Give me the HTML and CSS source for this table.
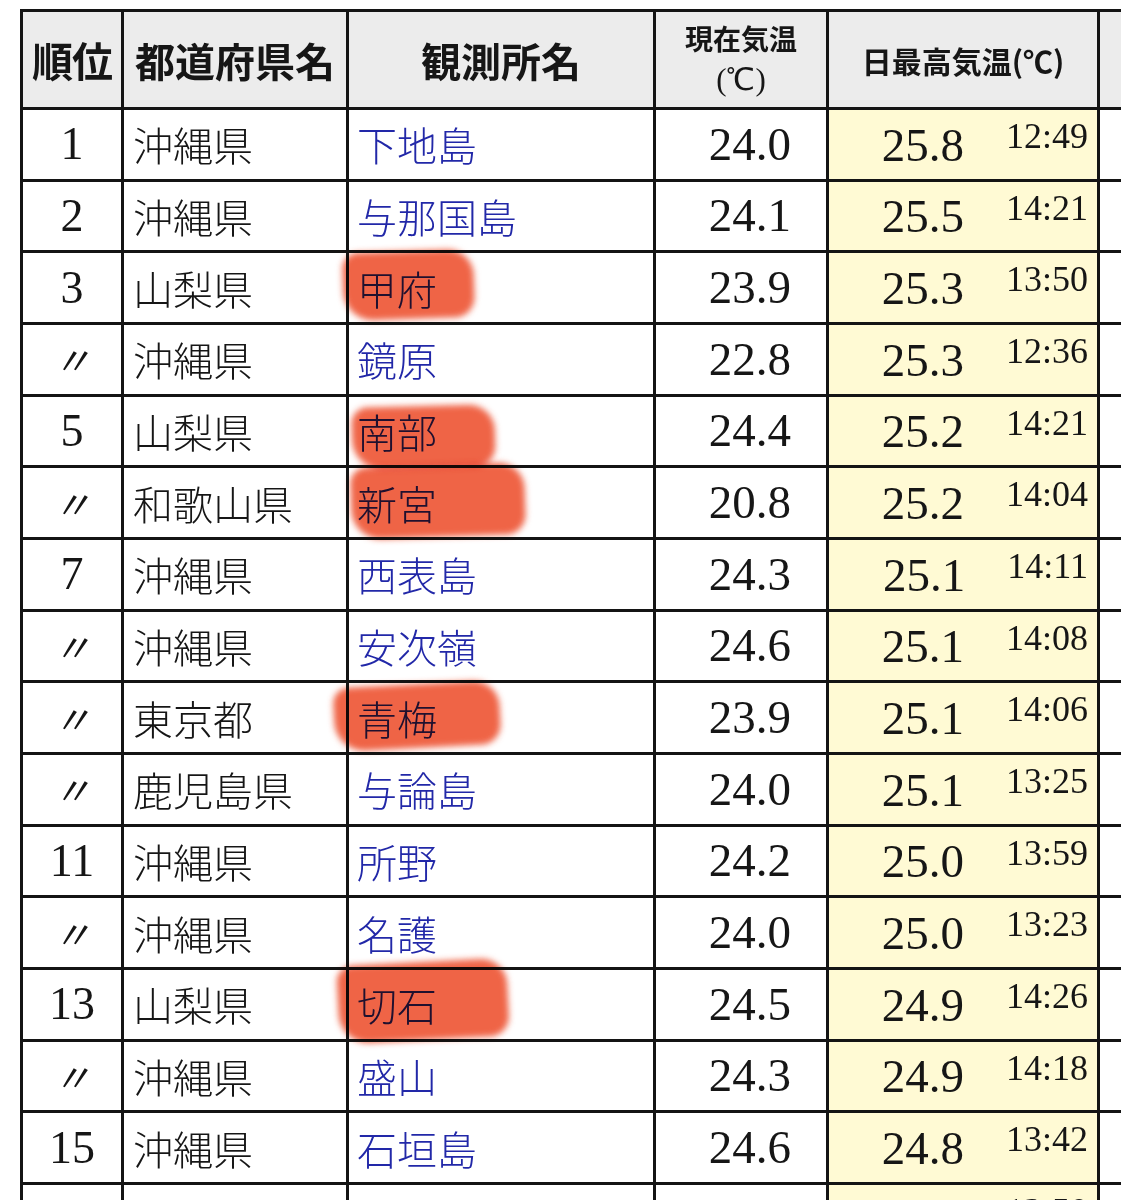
FILE: index.html
```html
<!DOCTYPE html>
<html lang="ja">
<head>
<meta charset="utf-8">
<link rel="stylesheet" href="styles.css">
</head>
<body>
<div class="page">
  <div class="table">
    <div class="cell head h-rank">順位</div>
    <div class="cell head h-pref">都道府県名</div>
    <div class="cell head h-station">観測所名</div>
    <div class="cell head h-now"><span>現在気温</span><span class="unit">(℃)</span></div>
    <div class="cell head h-max">日最高気温(℃)</div>
    <div class="cell head h-extra"></div>

    <div class="cell rank">1</div><div class="cell pref">沖縄県</div><div class="cell station">下地島</div><div class="cell now">24.0</div><div class="cell max"><span class="val">25.8</span><span class="time">12:49</span></div><div class="cell extra"></div>
    <div class="cell rank">2</div><div class="cell pref">沖縄県</div><div class="cell station">与那国島</div><div class="cell now">24.1</div><div class="cell max"><span class="val">25.5</span><span class="time">14:21</span></div><div class="cell extra"></div>
    <div class="cell rank">3</div><div class="cell pref">山梨県</div><div class="cell station">甲府</div><div class="cell now">23.9</div><div class="cell max"><span class="val">25.3</span><span class="time">13:50</span></div><div class="cell extra"></div>
    <div class="cell rank ditto">〃</div><div class="cell pref">沖縄県</div><div class="cell station">鏡原</div><div class="cell now">22.8</div><div class="cell max"><span class="val">25.3</span><span class="time">12:36</span></div><div class="cell extra"></div>
    <div class="cell rank">5</div><div class="cell pref">山梨県</div><div class="cell station">南部</div><div class="cell now">24.4</div><div class="cell max"><span class="val">25.2</span><span class="time">14:21</span></div><div class="cell extra"></div>
    <div class="cell rank ditto">〃</div><div class="cell pref">和歌山県</div><div class="cell station">新宮</div><div class="cell now">20.8</div><div class="cell max"><span class="val">25.2</span><span class="time">14:04</span></div><div class="cell extra"></div>
    <div class="cell rank">7</div><div class="cell pref">沖縄県</div><div class="cell station">西表島</div><div class="cell now">24.3</div><div class="cell max"><span class="val">25.1</span><span class="time">14:11</span></div><div class="cell extra"></div>
    <div class="cell rank ditto">〃</div><div class="cell pref">沖縄県</div><div class="cell station">安次嶺</div><div class="cell now">24.6</div><div class="cell max"><span class="val">25.1</span><span class="time">14:08</span></div><div class="cell extra"></div>
    <div class="cell rank ditto">〃</div><div class="cell pref">東京都</div><div class="cell station">青梅</div><div class="cell now">23.9</div><div class="cell max"><span class="val">25.1</span><span class="time">14:06</span></div><div class="cell extra"></div>
    <div class="cell rank ditto">〃</div><div class="cell pref">鹿児島県</div><div class="cell station">与論島</div><div class="cell now">24.0</div><div class="cell max"><span class="val">25.1</span><span class="time">13:25</span></div><div class="cell extra"></div>
    <div class="cell rank">11</div><div class="cell pref">沖縄県</div><div class="cell station">所野</div><div class="cell now">24.2</div><div class="cell max"><span class="val">25.0</span><span class="time">13:59</span></div><div class="cell extra"></div>
    <div class="cell rank ditto">〃</div><div class="cell pref">沖縄県</div><div class="cell station">名護</div><div class="cell now">24.0</div><div class="cell max"><span class="val">25.0</span><span class="time">13:23</span></div><div class="cell extra"></div>
    <div class="cell rank">13</div><div class="cell pref">山梨県</div><div class="cell station">切石</div><div class="cell now">24.5</div><div class="cell max"><span class="val">24.9</span><span class="time">14:26</span></div><div class="cell extra"></div>
    <div class="cell rank ditto">〃</div><div class="cell pref">沖縄県</div><div class="cell station">盛山</div><div class="cell now">24.3</div><div class="cell max"><span class="val">24.9</span><span class="time">14:18</span></div><div class="cell extra"></div>
    <div class="cell rank">15</div><div class="cell pref">沖縄県</div><div class="cell station">石垣島</div><div class="cell now">24.6</div><div class="cell max"><span class="val">24.8</span><span class="time">13:42</span></div><div class="cell extra"></div>
    <div class="cell rank"></div><div class="cell pref"></div><div class="cell station"></div><div class="cell now"></div><div class="cell max"><span class="val"></span><span class="time">13:50</span></div><div class="cell extra"></div>
  </div>

  <div class="mark m1"></div>
  <div class="mark m2"></div>
  <div class="mark m3"></div>
  <div class="mark m4"></div>
  <div class="mark m5"></div>
</div>
</body>
</html>
```

FILE: styles.css
```css
html, body {
  margin: 0;
  padding: 0;
  background: #ffffff;
  overflow: hidden;
}

body {
  width: 1121px;
  height: 1200px;
  font-family: "Liberation Serif", "Noto Sans CJK JP", serif;
  color: #161616;
}

.page {
  position: relative;
  width: 1121px;
  height: 1200px;
  overflow: hidden;
}

.table {
  display: grid;
  grid-template-columns: 98px 222px 304px 170px 268px 200px;
  grid-template-rows: 95px repeat(16, 68.67px);
  gap: 3px;
  padding: 3px;
  margin: 9px 0 0 20px;
  width: max-content;
  background: #141414;
}

.cell {
  background: #ffffff;
  display: flex;
  align-items: center;
  font-size: 40px;
  line-height: 1;
  white-space: nowrap;
}

.head {
  background: #ececec;
  justify-content: center;
  font-weight: bold;
  font-family: "Noto Sans CJK JP", sans-serif;
}

.h-rank {
  font-size: 41px;
  letter-spacing: -1px;
}

.h-pref,
.h-station {
  font-size: 40px;
}

.h-now {
  flex-direction: column;
  font-size: 28px;
  font-weight: 600;
  gap: 12px;
}

.h-now .unit {
  font-family: "Liberation Serif", serif;
  font-weight: normal;
  font-size: 31px;
}

.h-max {
  font-size: 30px;
  font-weight: 600;
}

.rank {
  justify-content: center;
  font-size: 46px;
}

.ditto {
  font-family: "Noto Sans CJK JP", sans-serif;
  font-size: 38px;
  font-style: italic;
}

.pref {
  padding-left: 9px;
  font-family: "Noto Sans CJK JP", sans-serif;
  font-weight: 300;
}

.station {
  padding-left: 8px;
  font-family: "Noto Sans CJK JP", sans-serif;
  font-weight: 300;
  color: #2228a8;
}

.now {
  justify-content: flex-end;
  padding-right: 35px;
  font-size: 47px;
}

.max {
  background: #fffad4;
  justify-content: flex-end;
  align-items: stretch;
  padding-right: 9px;
  gap: 42px;
}

.max .val {
  display: flex;
  align-items: center;
  font-size: 47px;
  padding-top: 2px;
}

.max .time {
  font-size: 36px;
  padding-top: 8px;
}

.extra {
  background: #ffffff;
}

.mark {
  position: absolute;
  background: #ee5838;
  mix-blend-mode: multiply;
  filter: blur(3px);
  border-radius: 16px 26px 20px 30px;
  opacity: 0.93;
}

.m1 { left: 343px; top: 251px; width: 131px; height: 68px; transform: rotate(-2deg); }
.m2 { left: 352px; top: 406px; width: 143px; height: 62px; transform: rotate(-1.5deg); }
.m3 { left: 351px; top: 465px; width: 174px; height: 72px; transform: rotate(-2deg); }
.m4 { left: 334px; top: 684px; width: 166px; height: 64px; transform: rotate(-3deg); }
.m5 { left: 338px; top: 962px; width: 170px; height: 78px; transform: rotate(-3deg); }
```
